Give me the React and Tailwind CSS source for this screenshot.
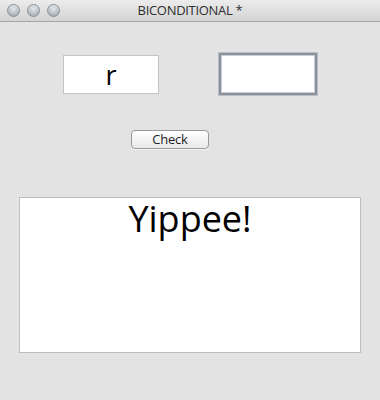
import React from "react";

const SANS = { fontFamily: '"Open Sans", "DejaVu Sans", sans-serif' };

function TrafficLight() {
  return (
    <span className="block w-[13px] h-[13px] rounded-full border border-[#8a8f96] bg-[radial-gradient(circle_at_50%_35%,#e6eaee_0%,#b7bec6_55%,#9aa2ab_100%)] shadow-[inset_0_1px_1px_rgba(255,255,255,0.6)]" />
  );
}

export default function App() {
  return (
    <div className="w-[380px] h-[400px] bg-[#e3e3e3] flex flex-col" style={SANS}>
      {/* title bar */}
      <div className="relative h-[22px] flex items-center bg-gradient-to-b from-[#ececec] to-[#d3d3d3] border-b border-[#a5a5a5]">
        <div className="flex items-center gap-[7px] pl-[7px]">
          <TrafficLight />
          <TrafficLight />
          <TrafficLight />
        </div>
        <div className="absolute inset-0 flex items-center justify-center text-[13px] font-medium text-[#2e2e2e] tracking-[-0.3px]">
          BICONDITIONAL *
        </div>
      </div>

      {/* inputs */}
      <div className="flex items-center gap-[60px] pl-[63px] mt-[31px] h-[42px]">
        <div className="w-[96px] h-[39px] bg-white border border-[#c4c4c4] flex items-center justify-center text-[27px] leading-none text-black">
          r
        </div>
        <div className="w-[98px] h-[42px] bg-white border-2 border-[#8a919a] shadow-[0_0_0_1px_#b9bfc6,inset_0_0_0_1px_#c9ced4]" />
      </div>

      {/* button */}
      <div className="flex pl-[131px] mt-[35px]">
        <button className="w-[78px] h-[19px] rounded-[4px] border border-[#9a9a9a] bg-gradient-to-b from-white to-[#e9e9e9] text-[13px] leading-none text-[#1e1e1e] font-medium tracking-[-0.2px] shadow-[0_1px_0_rgba(255,255,255,0.6)]">
          Check
        </button>
      </div>

      {/* output area */}
      <div className="ml-[19px] mt-[48px] w-[342px] h-[156px] bg-white border border-[#bdbdbd] flex justify-center pt-[3px]">
        <span className="text-[36px] leading-none text-black">Yippee!</span>
      </div>
    </div>
  );
}
